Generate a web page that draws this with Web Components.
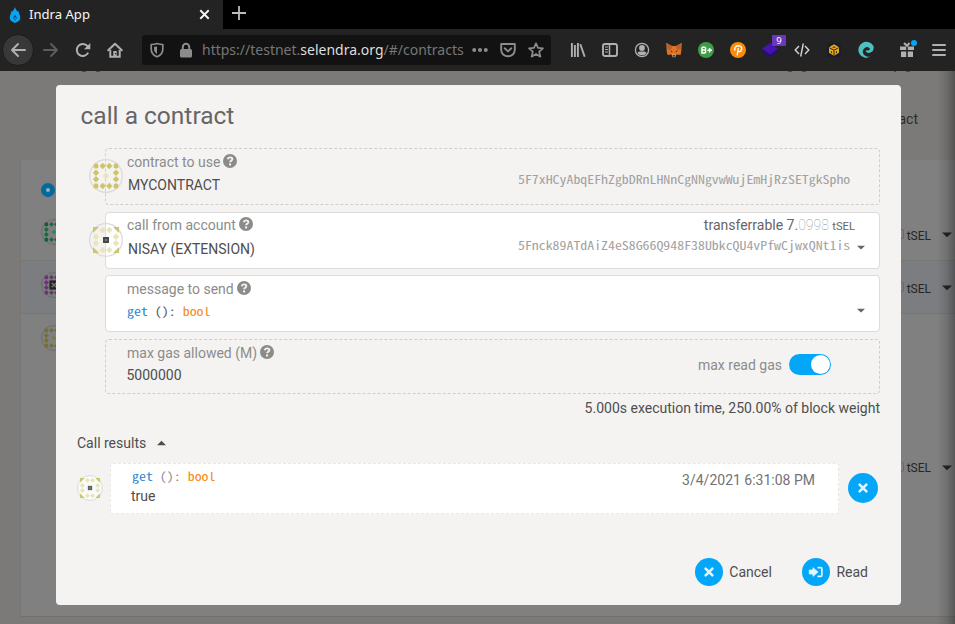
<!DOCTYPE html>
<html lang="en">
<head>
<meta charset="utf-8">
<title>Indra App</title>
<style>
html,body{margin:0;height:100%;overflow:hidden;background:#7b7a78;font-family:Roboto,"Liberation Sans",sans-serif;font-size:14px;color:#4e4e4e}
</style>
</head>
<body>
<indra-screen></indra-screen>
<script>
const define=(name,css,html)=>customElements.define(name,class extends HTMLElement{
  constructor(){super();this.attachShadow({mode:'open'});}
  connectedCallback(){
    this.shadowRoot.innerHTML='<style>'+css+'</style>'+(typeof html==='function'?html(this):html);
  }
});

/* ---------- icons ---------- */
const line=(d,w=2,extra='')=>`<path d="${d}" fill="none" stroke="currentColor" stroke-width="${w}" ${extra}/>`;
const ICONS={
 flame:`<path d="M8 0C8.300 1.500 9.500 3 10.500 4.500L11.500 4C11.600 6 13.300 8 13.300 11c0 2.500-2.300 3.800-5.300 5-3-1.200-5.300-2.500-5.300-5C2.700 8 4.400 6 4.500 4L5.500 4.500C6.500 3 7.700 1.500 8 0Z" fill="#0aa2f2"/><path d="M8 7.500 9.800 11 8 13.800 6.200 11Z" fill="#17415c"/><path d="M8 9.500 9 11.500 8 13 7 11.500Z" fill="#0aa2f2"/>`,
 close:line('M3.500 3.500 12.500 12.500M12.500 3.500 3.500 12.500',2),
 plus:line('M8 1V15M1 8H15',1.8),
 back:line('M15 8H2M8 2 2 8 8 14',2,'stroke-linejoin="round" stroke-linecap="round"'),
 forward:line('M1 8H14M8 2 14 8 8 14',2,'stroke-linejoin="round" stroke-linecap="round"'),
 reload:line('M13.200 10.600A6 6 0 1 1 12.500 4.200L14 5.800',2)+`<path d="M15.300 1V7.300H9Z" fill="currentColor"/>`,
 home:line('M1.200 8.300 8 1.700 14.800 8.300',2,'stroke-linejoin="round" stroke-linecap="round"')+line('M3.300 8V14.700H12.700V8',2)+`<path d="M6.300 9h3.400v6H6.300Z" fill="currentColor"/><rect x="8.100" y="11" width="1" height="1.300" fill="#232323"/>`,
 shield:line('M8 1.500C6 2.300 4 2.500 2.200 2.500V7C2.200 11 4.500 13.500 8 14.800 11.500 13.500 13.800 11 13.800 7V2.500C12 2.500 10 2.300 8 1.500Z',1.7,'stroke-linejoin="round"')+`<path d="M8 4.200V12C5.900 10.800 5 9.200 5 7V4.800C6 4.800 7 4.600 8 4.200Z" fill="currentColor"/>`,
 lock:`<rect x="2" y="7" width="12" height="8.500" rx="1.500" fill="currentColor"/>`+line('M4.800 8V5a3.200 3.200 0 0 1 6.400 0V8',2),
 dots:`<circle cx="2.200" cy="8" r="2" fill="currentColor"/><circle cx="8" cy="8" r="2" fill="currentColor"/><circle cx="13.800" cy="8" r="2" fill="currentColor"/>`,
 pocket:line('M1.200 2H14.800V8A6.800 6.300 0 0 1 1.200 8Z',1.9,'stroke-linejoin="round"')+line('M4.700 6.300 8 9.400 11.300 6.300',1.9,'stroke-linecap="round" stroke-linejoin="round"'),
 star:line('M8 1.300 10 5.900 15 6.300 11.200 9.700 12.400 14.700 8 12 3.600 14.700 4.800 9.700 1 6.300 6 5.900Z',1.7,'stroke-linejoin="round"'),
 library:line('M1.900 1V15M4.900 3V15M7.900 1V15M10.300 2.300 14.700 14.800',1.9),
 sidebar:`<rect x="1" y="2" width="14" height="12" rx="2" fill="none" stroke="currentColor" stroke-width="1.900"/>`+line('M7.500 2V14',1.500)+line('M3 5H6M3 7.500H6M3 10H6',1.100),
 account:`<circle cx="8" cy="8" r="6.600" fill="none" stroke="currentColor" stroke-width="1.300"/><circle cx="8" cy="6" r="2.900" fill="currentColor"/><path d="M3.400 11C5 9 6 9.500 8 9.500S11 9 12.600 11C11.500 12.800 10 13.300 8 13.300S4.500 12.800 3.400 11Z" fill="currentColor"/>`,
 fox:`<path d="M.3 1 6 4H10L15.700 1 15.300 9 14.500 13 10.500 12.500 9.300 15.300H6.700L5.500 12.500 1.500 13 .7 9Z" fill="#df7425"/><path d="M.3 1 6 4 5 8 1 7ZM15.700 1 10 4 11 8 15 7Z" fill="#b9602c"/><path d="M4 8 6.500 9.500 6 10.500ZM12 8 9.500 9.500 10 10.500Z" fill="#3b2f2b"/><path d="M6 12.500H10L9.500 15H6.500Z" fill="#d5c2ad"/><path d="M6.600 13.200H9.400V14.600H6.600Z" fill="#20232a"/>`,
 bplus:`<circle cx="8" cy="8" r="8" fill="#3f9c47"/><path d="M4 5.200V11H6.500A1.500 1.500 0 0 0 6.700 8.100 1.500 1.500 0 0 0 6.400 5.200H4M4 8.100H6.500" fill="none" stroke="#fff" stroke-width="1.500"/><path d="M9.300 8.200H14M11.600 6V10.500" stroke="#fff" stroke-width="1.500"/>`,
 pin:`<circle cx="8" cy="8" r="8" fill="#fa8b0c"/><path d="M7.200 13.300 8.300 6M5 8.600C4 5.500 6 3.800 8.500 3.800 11.300 3.800 12.500 6 11.200 8.300 10.200 10 8.600 9.800 7.700 9.200" fill="none" stroke="#fff" stroke-width="1.400"/>`,
 layers:`<path d="M8 4.500 16 10 8 15.800 0 10Z" fill="#24106a"/><path d="M8 1 16 6.800 8 12.500 0 6.800Z" fill="#4413b0"/>`,
 code:line('M5 4 1.200 8 5 12M11 4 14.800 8 11 12M9.300 1.500 6.700 14.500',1.400),
 cube:`<rect width="16" height="16" rx="2" fill="#191d2c"/><path d="M8 1.500 13.700 4.800V11.200L8 14.500 2.300 11.200V4.800Z" fill="#e7a716"/><path d="M3 5.500 8 8.300 13 5.500M8 9V14M5.200 9.500V11.500M10.800 9.500V11.500M6.500 4.800H9.500" fill="none" stroke="#191d2c" stroke-width="1.100"/>`,
 swirl:`<path d="M15.600 4.300A8 8 0 1 0 12.500 14.600C9 15.200 5 13.500 4.800 10 4.700 7 7.500 4.700 10 5.400 12.300 6 12.200 8 9.800 8.200L7.500 8.300C8 11 10.600 11.500 12.500 10.500 14.800 9.600 15.900 8.500 15.600 4.300Z" fill="#4dc0bf"/><path d="M10 5.400C12.300 6 12.200 8 9.800 8.200L7 8.300C6.800 6.500 8 5 10 5.400Z" fill="#232323"/>`,
 gift:`<path d="M1 4.600H7.200V8H1ZM8.800 4.600H15V8H8.800ZM2 9.400H7.200V15H2ZM8.800 9.400H14V15H8.800Z" fill="currentColor"/><path d="M5 1 8 3.800 10.500 1" fill="none" stroke="currentColor" stroke-width="2"/>`,
 menu:line('M2 3H14M2 8H14M2 13H14',2,'stroke-linecap="round"'),
 help:`<circle cx="8" cy="8" r="8" fill="#8b8b8a"/><path d="M5.300 6C5.600 4.500 6.700 3.900 8 3.900 9.500 3.900 10.700 4.800 10.700 6 10.700 7.600 8.100 7.600 8.100 9.500" fill="none" stroke="#f4f3f1" stroke-width="2.100"/><circle cx="8.100" cy="12" r="1.300" fill="#f4f3f1"/>`,
 down:`<path d="M0 5.500H16L8 13Z" fill="currentColor"/>`,
 up:`<path d="M0 11H16L8 3Z" fill="currentColor"/>`,
 cross:line('M3.500 3.500 12.500 12.500M12.500 3.500 3.500 12.500',3.500,'stroke-linecap="round"'),
 enter:`<path d="M.3 5.700H4.500V3L10.300 8 4.500 13V10.300H.3Z" fill="currentColor" stroke="currentColor" stroke-width=".8" stroke-linejoin="round"/>`+line('M10.500 2.900H13.200Q14.700 2.900 14.700 4.500V11.500Q14.700 13.100 13.200 13.100H10.500',2,'stroke-linecap="round"')
};
define('ui-icon',':host{display:inline-block;flex:none;width:var(--size,16px);height:var(--size,16px)}svg{display:block;width:100%;height:100%;overflow:visible}',
 el=>`<svg viewBox="0 0 16 16">${ICONS[el.getAttribute('name')]}</svg>`);

/* Ring of twelve shapes on a 4x4 lattice around a centre mark. */
define('identi-icon',':host{display:block;flex:none;width:var(--size,34px);height:var(--size,34px)}svg{display:block;width:100%;height:100%}',el=>{
 const c=el.getAttribute('corner'),s=el.getAttribute('side')||c,m=el.getAttribute('middle'),tri=el.hasAttribute('triangles');
 let g='';
 for(let y=0;y<4;y++)for(let x=0;x<4;x++){
  if(x%3&&y%3)continue;
  const cx=[7,13.700,20.300,27][x],cy=[7,13.700,20.300,27][y];
  if(!(x%3)&&!(y%3)){
   const dx=x?1:-1,dy=y?1:-1;
   g+=tri?`<path d="M${cx+dx*3} ${cy+dy*3}V${cy-dy*3}L${cx-dx*3} ${cy+dy*3}Z" fill="${c}"/>`:`<path d="M${cx-2.300} ${cy-1.300}L${cx-1.300} ${cy-2.500}H${cx+1.300}L${cx+2.300} ${cy-1.300}V${cy+1.300}L${cx+1.300} ${cy+2.500}H${cx-1.300}L${cx-2.300} ${cy+1.300}Z" fill="${c}"/>`;
  }else g+=`<path d="M${cx} ${cy-3.200}L${cx+3.200} ${cy}L${cx} ${cy+3.200}L${cx-3.200} ${cy}Z" fill="${s}"/>`;
 }
 const q=+el.getAttribute('square');
 g+=q?`<rect x="${17-q}" y="${17-q}" width="${2*q}" height="${2*q}" fill="${m}"/>`+(q<5?'<rect x="16.200" y="16.200" width="1.600" height="1.600" fill="#999"/>':`<path d="M14 14 20 20M20 14 14 20" stroke="#777" stroke-width="1.800"/>`):`<path d="M17 13.700 20.300 17 17 20.300 13.700 17Z" fill="${m}"/>`;
 return `<svg viewBox="0 0 34 34"><circle cx="17" cy="17" r="16.300" fill="${el.getAttribute('fill')||'none'}" stroke="${el.getAttribute('ring')||'#dcdbdb'}" stroke-width="1.300"/>${g}</svg>`;
});

/* ---------- browser chrome ---------- */
define('tab-strip',`:host{display:flex;height:29px;background:#000;font:13.100px/29px "Noto Sans",sans-serif;color:#f6f6f6}
 .tab{display:flex;align-items:center;width:223px;box-sizing:border-box;background:#232323;padding:0 11px 0 7px}
 .t{flex:1;padding-left:6px}.new{align-self:center;margin:-3px 0 0 8px;color:#bdbdbd}`,
 `<div class="tab"><ui-icon name="flame"></ui-icon><span class="t">Indra App</span><ui-icon name="close" style="--size:15px"></ui-icon></div><ui-icon class="new" name="plus"></ui-icon>`);

define('url-bar',`:host{display:flex;align-items:center;width:409px;height:30px;box-sizing:border-box;background:#121212;border-radius:3px;padding:0 7px 0 7px;color:#8c8c8c;font:14px/30px "Noto Sans",sans-serif;white-space:nowrap}
 .u{width:262px;margin:0 8px 0 8px;color:#777;}b{font-weight:400;color:#dedede}`,
 `<ui-icon name="shield"></ui-icon><ui-icon name="lock" style="margin-left:13px"></ui-icon><span class="u">https://testnet.<b>selendra.org</b>/#/contracts</span><ui-icon name="dots"></ui-icon><ui-icon name="pocket" style="margin-left:12px"></ui-icon><ui-icon name="star" style="margin-left:12px"></ui-icon>`);

define('nav-bar',`:host{display:flex;align-items:center;height:42px;box-sizing:border-box;background:#232323;color:#b0b0b0;padding-left:2px}
 .back{display:flex;align-items:center;justify-content:center;width:32px;height:32px;box-sizing:border-box;border-radius:50%;background:#383838;border:1px solid #1b1b1b}
 .left{display:flex;gap:16px;margin:0 19px 0 9px}.ext{display:flex;gap:16px;margin-left:19px}
 .badged{position:relative;height:16px}.n{position:absolute;left:10px;top:-7px;width:14px;height:11px;border-radius:1px;background:#6b35be;color:#fff;font:9.500px/11px "Noto Sans",sans-serif;text-align:center}
 .dot{position:absolute;left:12px;top:-2px;width:6px;height:6px;border-radius:50%;background:#00a7f5}.end{display:flex;gap:16px;margin-left:25px}`,
 `<div class="back"><ui-icon name="back"></ui-icon></div><div class="left"><ui-icon name="forward" style="color:#5d5d5d"></ui-icon><ui-icon name="reload"></ui-icon><ui-icon name="home"></ui-icon></div><url-bar></url-bar>
 <div class="ext"><ui-icon name="library"></ui-icon><ui-icon name="sidebar"></ui-icon><ui-icon name="account"></ui-icon><ui-icon name="fox"></ui-icon><ui-icon name="bplus"></ui-icon><ui-icon name="pin"></ui-icon><span class="badged"><ui-icon name="layers"></ui-icon><span class="n">9</span></span><ui-icon name="code" style="color:#d5d5d5"></ui-icon><ui-icon name="cube" style="--size:14px;margin:1px"></ui-icon><ui-icon name="swirl"></ui-icon></div>
 <div class="end"><span class="badged"><ui-icon name="gift"></ui-icon><span class="dot"></span></span><ui-icon name="menu"></ui-icon></div>`);

/* ---------- dimmed contracts page ---------- */
define('contract-row',`:host{display:flex;align-items:center;box-sizing:border-box;height:53px;padding:0 3px 0 20px;border-bottom:1px solid #777674;font-size:12px;color:#252525}
 :host([selected]){background:#7b7d80}::slotted(*){margin-top:-5px}.bal{width:12px;height:10px;box-sizing:border-box;border:1px solid #75626d;border-radius:2px;margin:0 3px 0 auto}.t{margin:3px 11px 0 0}.c{color:#242424}`,
 el=>`<slot></slot>${el.hasAttribute('bare')?'':'<span class="bal"></span><span class="t">tSEL</span><ui-icon class="c" name="down" style="--size:10px"></ui-icon>'}`);

define('contracts-page',`:host{display:flex;flex-direction:column;height:553px;background:#7b7a78;color:#2c2c2c}
 .peek{display:flex;height:1px;padding-left:82px}.peek i{height:1px;width:4px;margin-right:10px;background:#4a4947}.g{flex:1}
 .tab{height:88px;box-sizing:border-box;padding:37px 37px 0 0;text-align:right;line-height:20px}
 .panel{box-sizing:border-box;width:935px;height:457px;margin-left:20px;background:#808080;border-left:1px solid #777674;border-bottom:1px solid #73716f}
 .head{height:48px;box-sizing:border-box;padding:23px 0 0 20px}.radio{width:14px;height:14px;box-sizing:border-box;border-radius:50%;border:5px solid #026a9c;background:#a0adb1}
 .blank{height:73px}`,
 `<div class="peek"><i></i><i></i><span class="g"></span><i></i><i style="margin-right:88px"></i><i style="width:2px"></i><i style="margin-right:45px"></i></div>
 <div class="tab">Contract</div>
 <div class="panel"><div class="head"><div class="radio"></div></div>
 <contract-row><identi-icon style="--size:26px" corner="#145c37" side="#186a42" middle="#2d8a60" ring="#6c6c6c"></identi-icon></contract-row>
 <contract-row selected><identi-icon style="--size:26px" corner="#6b3371" middle="#222" square="6" ring="#6c6c6c"></identi-icon></contract-row>
 <contract-row bare style="border:0"><identi-icon style="--size:26px" corner="#746e30" middle="#7f7b4a" ring="#6c6c6c"></identi-icon></contract-row>
 <div class="blank"></div><contract-row style="border:0"></contract-row></div>`);

/* ---------- dialog parts ---------- */
/* The half-em monospace face is widened to a 0.6em advance. */
const MONO='font:500 11.600px/16px "Noto Sans Mono CJK SC","Noto Sans Mono CJK JP",monospace;font-weight:400;';
define('code-signature',`:host{display:block;${MONO}color:var(--punct,#555);white-space:pre;transform:scaleX(1.2);transform-origin:0 50%}.f{color:#2e86d0}.r{color:#f68b1c}`,
 `<span class="f">get</span> (): <span class="r">bool</span>`);

define('form-field',`:host{display:flex;position:relative;box-sizing:border-box;height:57px;border:1px solid #dcdcdc;border-radius:4px;background:#fff;padding:0 11px 0 21px}
 :host([readonly]){border:1px dashed #cfcecd;background:none}
 .main{flex:1;padding-top:var(--top,1px)}.label{display:flex;align-items:center;gap:3px;height:24px;color:#8c8c8b}.label ui-icon{--size:14px;margin-top:-2px}
 .value{display:flex;align-items:center;height:23px;color:#4e4e4e}
 ::slotted([slot=icon]){position:absolute;left:-17px;top:10px}
 .end{display:flex;flex-direction:column;align-items:flex-end;margin-right:var(--end,17.500px)}
 .caret{position:absolute;right:14px;bottom:17px;--size:8px;color:#666}`,
 el=>`<slot name="icon"></slot><div class="main"><div class="label"><span>${el.getAttribute('label')}</span><ui-icon name="help"></ui-icon></div><div class="value"><slot></slot></div></div><div class="end"><slot name="end"></slot></div>${el.hasAttribute('dropdown')?'<ui-icon class="caret" name="down"></ui-icon>':''}`);

define('address-text',`:host{display:block;${MONO}color:#a2a2a1;transform:scaleX(1.194);transform-origin:100% 50%}`,'<slot></slot>');

define('toggle-switch',`:host{display:flex;align-items:center;gap:7px;color:#8c8c8b}.track{width:42px;height:21px;box-sizing:border-box;border-radius:11px;background:#04a7f7;padding:1px;display:flex;justify-content:flex-end}.knob{width:19px;height:19px;border-radius:50%;background:#fff}`,
 `<slot></slot><span class="track"><span class="knob"></span></span>`);

define('round-button',`:host{display:flex;align-items:center;gap:6px}.b{display:flex;align-items:center;justify-content:center;width:var(--d,28px);height:var(--d,28px);border-radius:50%;background:#04a7f7;color:#e2f5ff}`,
 el=>`<span class="b"><ui-icon name="${el.getAttribute('icon')}" style="--size:${el.getAttribute('glyph')||14}px"></ui-icon></span><slot></slot>`);

define('call-result',`:host{display:flex;align-items:center;height:51px}.card{display:flex;justify-content:space-between;width:729px;height:51px;box-sizing:border-box;margin:0 9px 0 7px;background:#fff;border:1px dashed #e8e7e6;border-radius:3px;padding:3px 23px 0 20px}
 .time{color:#737373;line-height:26px}.val{line-height:20px;margin-top:1px}code-signature{display:block;height:18px;line-height:18px;margin-left:.5px;--punct:#8d8d8d}`,
 `<identi-icon style="--size:26px;margin-top:-1px" triangles square="2.8" corner="#cdc56b" side="#e8e5b9" middle="#5f5f5f" fill="#fafaf9"></identi-icon><div class="card"><div><code-signature></code-signature><div class="val"><slot></slot></div></div><span class="time"><slot name="time"></slot></span></div><round-button icon="cross" glyph="12" style="--d:30px;margin-top:-1px"></round-button>`);

define('call-dialog',`:host{display:flex;flex-direction:column;box-sizing:border-box;width:845px;height:520px;border-radius:4px;background:#f4f3f1;padding:0 21px}
 h1{margin:14px 0 0 3.500px;height:49px;font:400 24.500px/34px Roboto,sans-serif;color:#666}
 .fields{display:flex;flex-direction:column;margin-left:28px}.sum{height:28px;line-height:28px;text-align:right}
 .results{display:flex;align-items:center;gap:11px;height:20px;margin:11px 0 10px}.foot{display:flex;justify-content:flex-end;gap:30.500px;margin:44px 12px 0 0}`,
 `<h1>call a contract</h1><div class="fields">
 <form-field readonly label="contract to use"><identi-icon slot="icon" corner="#cdc56b" middle="#e8e5b9"></identi-icon><span style="margin:-2px 0 0 1px">MYCONTRACT</span><address-text slot="end" style="margin-top:22px">5F7xHCyAbqEFhZgbDRnLHNnCgNNgvwWujEmHjRzSETgkSpho</address-text></form-field>
 <form-field dropdown label="call from account" style="margin-top:7px;--top:0px"><identi-icon slot="icon" triangles square="3" corner="#cdc56b" side="#e8e5b9" middle="#484848"></identi-icon><span style="margin-left:1px">NISAY (EXTENSION)</span><balance-text slot="end"></balance-text><address-text slot="end" style="margin-top:-2px">5Fnck89ATdAiZ4eS8G66Q948F38UbkcQU4vPfwCjwxQNt1is</address-text></form-field>
 <form-field dropdown label="message to send" style="margin-top:6px"><code-signature style="margin:-3px 0 0 -.5px"></code-signature></form-field>
 <form-field readonly label="max gas allowed (M)" style="margin-top:7px;height:55px;--end:37px"><span style="margin:-3px 0 0 -.5px">5000000</span><toggle-switch slot="end" style="margin-top:14px">max read gas</toggle-switch></form-field>
 <div class="sum">5.000s execution time, 250.00% of block weight</div></div>
 <div class="results"><span>Call results</span><ui-icon name="up" style="--size:9px"></ui-icon></div>
 <call-result>true<span slot="time">3/4/2021 6:31:08 PM</span></call-result>
 <div class="foot"><round-button icon="cross" glyph="12">Cancel</round-button><round-button icon="enter">Read</round-button></div>`);

define('balance-text',`:host{display:block;line-height:24px;margin-right:-4.500px;color:#666}.d{font-weight:100;color:#999}.u{font-size:11.200px}`,`transferrable 7.<span class="d">0998</span> <span class="u">tSEL</span>`);

define('indra-screen',`:host{display:flex;flex-direction:column;width:955px;height:624px;overflow:hidden}.stage{position:relative;height:553px}
 .overlay{position:absolute;inset:0;padding:14px 0 0 56px;background:linear-gradient(90deg,transparent 937px,rgba(0,0,0,.12) 947px,rgba(0,0,0,.32) 955px)}`,
 `<tab-strip></tab-strip><nav-bar></nav-bar><div class="stage"><contracts-page></contracts-page><div class="overlay"><call-dialog></call-dialog></div></div>`);
</script>
</body>
</html>
